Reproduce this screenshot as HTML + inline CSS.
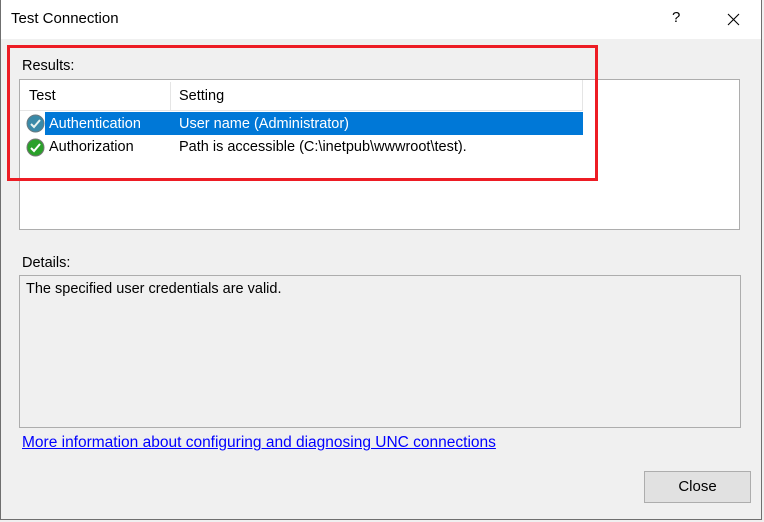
<!DOCTYPE html>
<html><head><style>
body{margin:0;width:764px;height:522px;overflow:hidden;background:#f0f0f0;font-family:"Liberation Sans",sans-serif;font-size:14.5px;color:#000;position:relative}
.a{position:absolute;white-space:nowrap}
</style></head><body>
<div class="a" style="left:0;top:0;width:762px;height:520px;border:1px solid #6f6f6f;border-top:none;box-sizing:border-box"></div>
<div class="a" style="top:0;left:1px;width:760px;height:39px;background:#fff"></div>
<div class="a" style="left:11px;top:10px;font-size:15px">Test Connection</div>
<div class="a" style="left:672px;top:9px;font-size:15px">?</div>
<svg class="a" style="left:727px;top:13px" width="13" height="13"><path d="M1 1L12 12M12 1L1 12" stroke="#000" stroke-width="1.1"/></svg>
<div class="a" style="left:22px;top:58px">Results:</div>
<div class="a" style="left:19px;top:79px;width:721px;height:151px;background:#fff;border:1px solid #adadad;box-sizing:border-box"></div>
<div class="a" style="left:20px;top:80px;width:563px;height:31px;border-bottom:1px solid #e5e5e5;border-right:1px solid #e5e5e5;box-sizing:border-box"></div>
<div class="a" style="left:170px;top:82px;width:1px;height:28px;background:#e5e5e5"></div>
<div class="a" style="left:29px;top:88px">Test</div>
<div class="a" style="left:179px;top:88px">Setting</div>
<div class="a" style="left:45px;top:112px;width:538px;height:23px;background:#0078d7"></div>
<svg class="a" style="left:26px;top:114px" width="19" height="19"><circle cx="9.5" cy="9.5" r="8.5" fill="#3a8aa8" stroke="#6a7a80"/><path d="M5 10l3 3 6-7" stroke="#e8f4f0" stroke-width="2" fill="none"/></svg>
<svg class="a" style="left:26px;top:138px" width="19" height="19"><circle cx="9.5" cy="9.5" r="8.5" fill="#2aa02a" stroke="#777"/><path d="M5 10l3 3 6-7" stroke="#fff" stroke-width="2" fill="none"/></svg>
<div class="a" style="left:49px;top:116px;color:#fff">Authentication</div>
<div class="a" style="left:179px;top:116px;color:#fff">User name (Administrator)</div>
<div class="a" style="left:49px;top:139px">Authorization</div>
<div class="a" style="left:179px;top:139px">Path is accessible (C:\inetpub\wwwroot\test).</div>
<div class="a" style="left:7px;top:45px;width:591px;height:136px;border:3px solid #ed1c24;box-sizing:border-box"></div>
<div class="a" style="left:22px;top:255px">Details:</div>
<div class="a" style="left:19px;top:275px;width:722px;height:153px;border:1px solid #adadad;box-sizing:border-box"></div>
<div class="a" style="left:26px;top:281px">The specified user credentials are valid.</div>
<div class="a" style="left:22px;top:434px;font-size:15.5px;color:#0000ff;text-decoration:underline">More information about configuring and diagnosing UNC connections</div>
<div class="a" style="left:644px;top:471px;width:107px;height:32px;background:#e1e1e1;border:1px solid #adadad;box-sizing:border-box;text-align:center;line-height:30px;font-size:15px">Close</div>
</body></html>
